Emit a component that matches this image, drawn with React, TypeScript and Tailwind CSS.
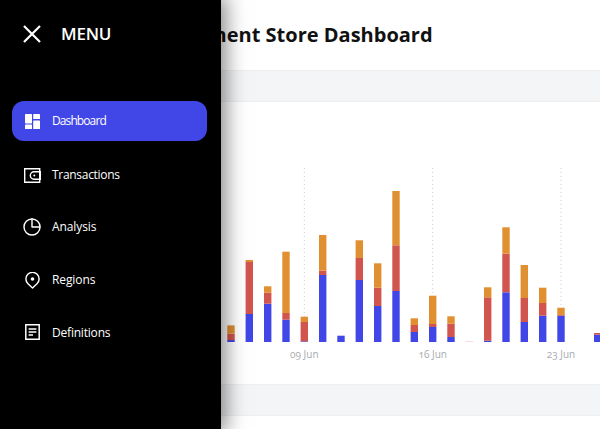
const bars: [number, number, number, number][] = [
  [231, 2, 6.3, 8.3],
  [249.3, 28, 52, 2],
  [267.7, 38.3, 11, 6.4],
  [286, 22.3, 6.7, 61.3],
  [304.3, 0.7, 19.3, 5.3],
  [322.7, 67, 4.3, 35.7],
  [341, 6.3, 0, 0],
  [359.3, 62, 22, 17.7],
  [377.7, 36, 18.3, 24.4],
  [396, 51, 45.7, 54.3],
  [414.3, 10, 7, 6.7],
  [432.7, 15, 3, 28.3],
  [451, 5, 13.3, 7.4],
  [487.7, 1.3, 43.4, 10],
  [506, 49.7, 38.6, 26.4],
  [524.3, 20, 24, 33],
  [542.7, 26.3, 12.7, 15.3],
  [561, 26.3, 0.7, 7.3],
  [597.7, 7.3, 1.7, 0],
];

function Chart() {
  return (
    <svg viewBox="221 102 379 282" className="h-[282px] w-[379px]">
      {[304.3, 432.7, 561].map((x) => (
        <line key={x} x1={x} x2={x} y1={168} y2={342} stroke="#c9cdd3" strokeWidth={1} strokeDasharray="1 3" />
      ))}
      {bars.map(([x, b, r, o]) => (
        <g key={x}>
          <rect x={x - 3.7} y={342 - b} width={7.4} height={b} fill="#4147e6" />
          <rect x={x - 3.7} y={342 - b - r} width={7.4} height={r} fill="#d2544e" />
          <rect x={x - 3.7} y={342 - b - r - o} width={7.4} height={o} fill="#e08f31" />
        </g>
      ))}
      <rect x={465.6} y={341.3} width={7.4} height={0.7} fill="#f6c9cc" />
      {[
        [304.3, "09 Jun"],
        [432.7, "16 Jun"],
        [561, "23 Jun"],
      ].map(([x, t]) => (
        <text
          key={t as string}
          x={x as number}
          y={357.5}
          textAnchor="middle"
          fill="#a8abb0"
          className="text-[10px] oldstyle-nums"
          style={{ fontFamily: '"Open Sans", sans-serif' }}
        >
          {t as string}
        </text>
      ))}
    </svg>
  );
}

const DashboardIcon = () => (
  <svg viewBox="0 0 15 15" className="h-[15px] w-[15px]" fill="#fff">
    <rect x="0" y="0" width="7" height="9.4" rx="0.6" />
    <rect x="8.2" y="0" width="6.8" height="5" rx="0.6" />
    <rect x="8.2" y="6.4" width="6.8" height="8.6" rx="0.6" />
    <rect x="0" y="10.6" width="7" height="4.4" rx="0.6" />
  </svg>
);

const WalletIcon = () => (
  <svg viewBox="0 0 17 15" className="mt-0.5 h-[15px] w-[17px]" fill="none" stroke="#fff" strokeWidth="1.4">
    <path d="M0.7 0.7h15v13.6h-15z" />
    <path d="M16.3 3.8H10a3.7 3.7 0 0 0 0 7.4h6.3z" />
    <circle cx="10.3" cy="7.5" r="1" fill="#fff" stroke="none" />
  </svg>
);

const PieIcon = () => (
  <svg viewBox="0 0 18 18" className="h-[18px] w-[18px]" fill="none" stroke="#fff" strokeWidth="1.4" strokeLinecap="round" strokeLinejoin="round">
    <circle cx="9" cy="9" r="8" />
    <path d="M9 1v8h8" />
  </svg>
);

const PinIcon = () => (
  <svg viewBox="0 0 15 17" className="h-[17px] w-[15px]" fill="none" stroke="#fff" strokeWidth="1.4" strokeLinejoin="round">
    <path d="M7.5 16 3 11.8a6.6 6.6 0 1 1 9 0z" />
    <circle cx="7.5" cy="7" r="1.8" fill="#fff" stroke="none" />
  </svg>
);

const DocIcon = () => (
  <svg viewBox="0 0 15 16" className="mb-0.5 h-4 w-[15px]" fill="none" stroke="#fff" strokeWidth="1.5">
    <path d="M0.8 0.8h13.4v14.4H0.8z" />
    <path d="M3.6 5h7.8M3.6 8h7.8M3.6 11h4.4" />
  </svg>
);

const items = [
  { label: "Transactions", icon: <WalletIcon />, text: "mt-0.5 tracking-[-0.3px]" },
  { label: "Analysis", icon: <PieIcon />, text: "tracking-[-0.1px]" },
  { label: "Regions", icon: <PinIcon />, text: "tracking-[-0.1px]" },
  { label: "Definitions", icon: <DocIcon />, text: "tracking-[-0.2px]" },
];

export default function App() {
  return (
    <div className="relative h-[429px] w-[600px] overflow-hidden bg-white font-['Open_Sans','Noto_Sans',sans-serif]">
      <main>
        <header className="flex h-[70px] items-center pb-px pl-[138px]">
          <h1 className="text-[20px] font-bold text-[#111]">Department Store Dashboard</h1>
        </header>
        <div className="h-8 border-y border-[#eeeff1] bg-[#f4f5f7]" />
        <div className="flex h-[282px] justify-end">
          <Chart />
        </div>
        <div className="h-8 border-y border-[#eeeff1] bg-[#f4f5f7]" />
      </main>

      <aside className="absolute inset-y-0 left-0 w-[221px] bg-black text-white shadow-[0_0_20px_4px_rgba(0,0,0,0.5)]">
        <div className="flex h-[67px] items-center pl-[23px]">
          <svg viewBox="0 0 18 18" className="h-[18px] w-[18px]" fill="none" stroke="#fff" strokeWidth="2.2">
            <path d="M1 1l16 16M17 1 1 17" />
          </svg>
          <span className="ml-5 text-[17px] font-semibold tracking-[-0.2px]">MENU</span>
        </div>
        <nav className="mt-[34px] flex flex-col gap-[13px] pl-3 pr-[14px]">
          <div className="flex h-10 items-center rounded-xl bg-[#4147e6] pl-[11px]">
            <span className="flex w-[18px] justify-center"><DashboardIcon /></span>
            <span className="ml-[11px] text-[12px] tracking-[-0.9px]">Dashboard</span>
          </div>
          {items.map((it) => (
            <div key={it.label} className="flex h-10 items-center pl-[11px]">
              <span className="flex w-[18px] justify-center">{it.icon}</span>
              <span className={`ml-[11px] text-[12px] ${it.text}`}>{it.label}</span>
            </div>
          ))}
        </nav>
      </aside>
    </div>
  );
}
